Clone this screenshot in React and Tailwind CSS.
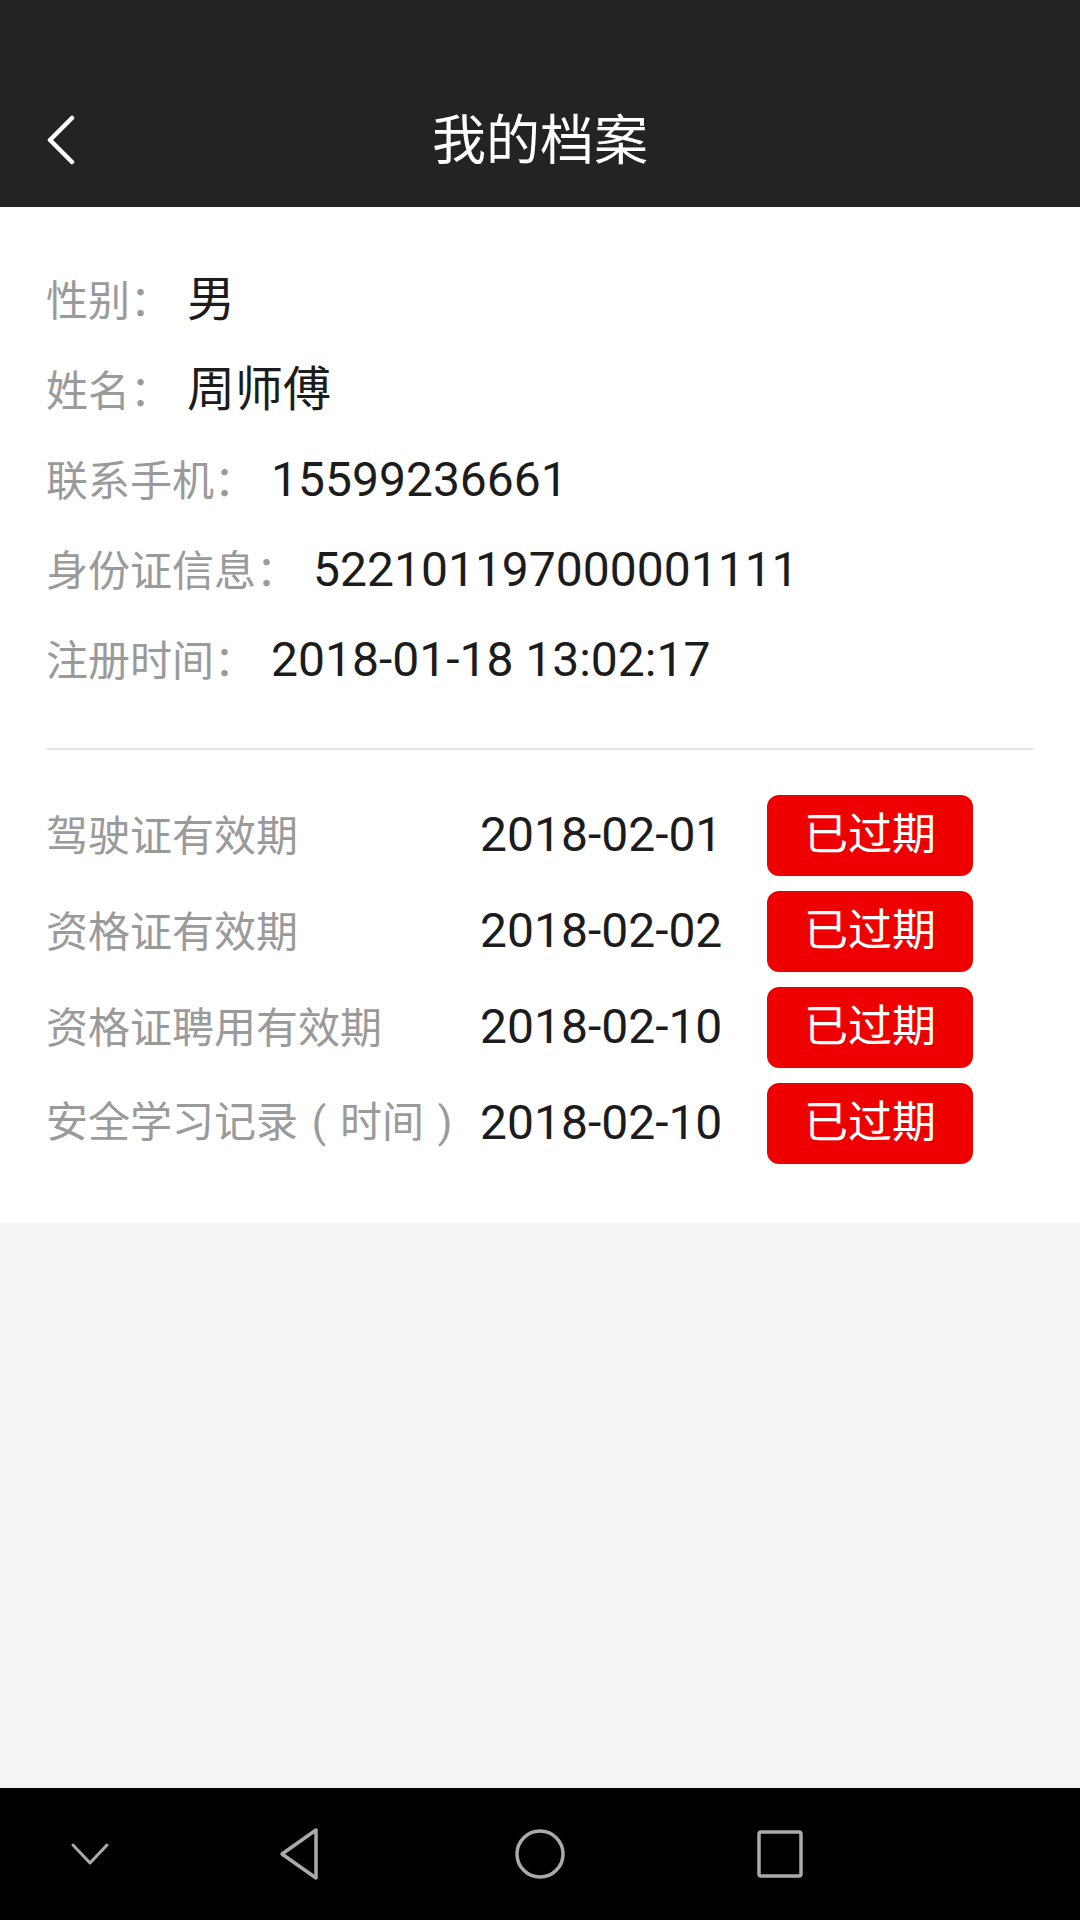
const font = { fontFamily: "Roboto, 'Noto Sans CJK SC', sans-serif" };
const cjk = { fontFamily: "'Noto Sans CJK SC', sans-serif" };

const profile = [
    { label: "性别：", value: "男" },
    { label: "姓名：", value: "周师傅" },
    { label: "联系手机：", value: "15599236661" },
    { label: "身份证信息：", value: "522101197000001111" },
    { label: "注册时间：", value: "2018-01-18 13:02:17" },
];

// paren glyphs sit centred in their cell in the screenshot
const Paren = ({ children }) => (
    <span className="inline-block w-[42px] text-center" style={font}>{children}</span>
);

const certs = [
    { label: "驾驶证有效期", date: "2018-02-01" },
    { label: "资格证有效期", date: "2018-02-02" },
    { label: "资格证聘用有效期", date: "2018-02-10" },
    { label: <>安全学习记录<Paren>(</Paren>时间<Paren>)</Paren></>, date: "2018-02-10" },
];

const App = () => {
    return (
        <div className="w-[1080px] h-[1920px] flex flex-col bg-[#f4f4f6]" style={font}>
            {/* Header */}
            <header className="bg-[#232323] h-[207px] flex flex-col shrink-0">
                <div className="h-[76px]" />
                <div className="relative flex-1 flex items-center justify-center">
                    <button className="absolute left-[40px] top-1/2 -translate-y-1/2 -mt-[2px] p-[4px]">
                        <svg width="32" height="50" viewBox="0 0 32 50" fill="none">
                            <polyline points="28,3 6,25 28,47" stroke="#fff" strokeWidth="4.5" strokeLinecap="round" strokeLinejoin="round" />
                        </svg>
                    </button>
                    <h1 className="text-white text-[54px] leading-none">我的档案</h1>
                </div>
            </header>

            {/* Content */}
            <main className="bg-white px-[46px] pt-[48px] pb-[52px]">
                <div className="flex flex-col">
                    {profile.map((item) => (
                        <div key={item.label} className="h-[90px] flex items-center">
                            <span className="mb-[4px] text-[42px] leading-none text-[#9a9a9a]" style={cjk}>{item.label}</span>
                            <span className="ml-[15px] text-[48px] leading-none text-[#1c1c1c]">{item.value}</span>
                        </div>
                    ))}
                </div>

                <hr className="mt-[43px] border-0 h-[2px] bg-[#e6e6e6]" />

                <div className="mt-[37px] flex flex-col">
                    {certs.map((item, i) => (
                        <div key={i} className="h-[96px] flex items-center">
                            <span className="mb-[4px] w-[434px] shrink-0 text-[42px] leading-none text-[#9a9a9a] whitespace-nowrap" style={cjk}>{item.label}</span>
                            <span className="w-[287px] shrink-0 text-[48px] leading-none text-[#1c1c1c]">{item.date}</span>
                            <span className="w-[206px] h-[81px] rounded-[12px] bg-[#ee0000] text-white text-[44px] leading-none flex items-center justify-center">
                                已过期
                            </span>
                        </div>
                    ))}
                </div>
            </main>

            <div className="flex-1" />

            {/* Android nav bar */}
            <nav className="h-[132px] bg-black shrink-0 flex items-center">
                <div className="w-[180px] flex justify-center">
                    <svg width="40" height="24" viewBox="0 0 40 24" fill="none">
                        <polyline points="3,3 20,21 37,3" stroke="#aaa" strokeWidth="3" strokeLinecap="round" strokeLinejoin="round" />
                    </svg>
                </div>
                <div className="w-[240px] flex justify-center">
                    <svg width="46" height="54" viewBox="0 0 46 54" fill="none">
                        <path d="M39 3 L39 51 L5 27 Z" stroke="#aaa" strokeWidth="3.5" strokeLinejoin="round" />
                    </svg>
                </div>
                <div className="w-[240px] flex justify-center">
                    <svg width="54" height="54" viewBox="0 0 54 54" fill="none">
                        <circle cx="27" cy="27" r="23" stroke="#aaa" strokeWidth="3.5" />
                    </svg>
                </div>
                <div className="w-[240px] flex justify-center">
                    <svg width="48" height="50" viewBox="0 0 48 50" fill="none">
                        <rect x="3" y="3" width="42" height="44" rx="2" stroke="#aaa" strokeWidth="3.5" />
                    </svg>
                </div>
            </nav>
        </div>
    );
};

export default App;
